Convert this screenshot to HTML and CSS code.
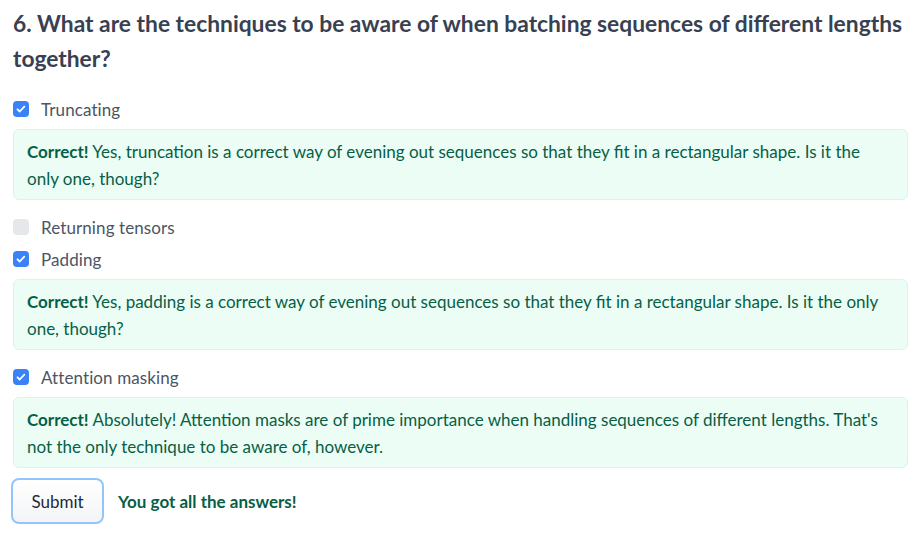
FILE: index.html
```html
<!DOCTYPE html>
<html>
<head>
<meta charset="utf-8">
<link rel="stylesheet" href="styles.css">
</head>
<body>
<div class="quiz">
  <h3 class="question">6. What are the techniques to be aware of when batching sequences of different lengths together?</h3>
  <div class="options">
    <label class="option"><span class="box checked"><svg viewBox="0 0 16 16" width="16" height="16"><path d="M4.5 8.3l2.2 2.2 4.6-4.8" fill="none" stroke="#fff" stroke-width="1.8" stroke-linecap="round" stroke-linejoin="round"/></svg></span><span class="label">Truncating</span></label>
    <div class="feedback"><strong>Correct!</strong> Yes, truncation is a correct way of evening out sequences so that they fit in a rectangular shape. Is it the only one, though?</div>
    <label class="option"><span class="box"></span><span class="label">Returning tensors</span></label>
    <label class="option"><span class="box checked"><svg viewBox="0 0 16 16" width="16" height="16"><path d="M4.5 8.3l2.2 2.2 4.6-4.8" fill="none" stroke="#fff" stroke-width="1.8" stroke-linecap="round" stroke-linejoin="round"/></svg></span><span class="label">Padding</span></label>
    <div class="feedback"><strong>Correct!</strong> Yes, padding is a correct way of evening out sequences so that they fit in a rectangular shape. Is it the only one, though?</div>
    <label class="option"><span class="box checked"><svg viewBox="0 0 16 16" width="16" height="16"><path d="M4.5 8.3l2.2 2.2 4.6-4.8" fill="none" stroke="#fff" stroke-width="1.8" stroke-linecap="round" stroke-linejoin="round"/></svg></span><span class="label">Attention masking</span></label>
    <div class="feedback"><strong>Correct!</strong> Absolutely! Attention masks are of prime importance when handling sequences of different lengths. That's not the only technique to be aware of, however.</div>
  </div>
  <div class="actions">
    <button class="submit">Submit</button>
    <span class="result">You got all the answers!</span>
  </div>
</div>
</body>
</html>
```
FILE: styles.css
```css
html, body { margin: 0; background: #fff; }
body { font-family: Lato, "Noto Sans", sans-serif; }
.quiz { padding: 6px 11px 0 13px; }
.question {
  margin: 0;
  font-size: 22.8px;
  line-height: 35px;
  font-weight: 700;
  color: #374151;
}
.options { margin-top: 17px; display: flex; flex-direction: column; }
.option { display: flex; align-items: center; height: 32px; }
.box {
  width: 16px; height: 16px; border-radius: 4px;
  background: #e5e7eb; display: flex; margin-right: 12px; flex: none;
}
.box.checked { background: #3b82f6; }
.label { font-size: 17px; color: #4b5563; letter-spacing: 0.1px; }
.feedback {
  margin: 4px 0 11px;
  padding: 8px 13px 7px;
  background: #ecfdf5;
  border: 1px solid #d1fae5;
  border-radius: 6px;
  color: #065f46;
  font-size: 17px;
  line-height: 27px;
}
.feedback strong { font-weight: 700; }
.actions { display: flex; align-items: center; margin-top: -1px; }
.submit {
  font-family: inherit;
  font-size: 17px;
  color: #1f2937;
  width: 93px;
  height: 46px;
  padding: 0;
  margin-left: -2px;
  border: 2px solid #93c5fd;
  border-radius: 8px;
  background: linear-gradient(#fff, #f3f4f6);
}
.result { margin-left: 14px; font-size: 17px; font-weight: 700; color: #065f46; }
```
